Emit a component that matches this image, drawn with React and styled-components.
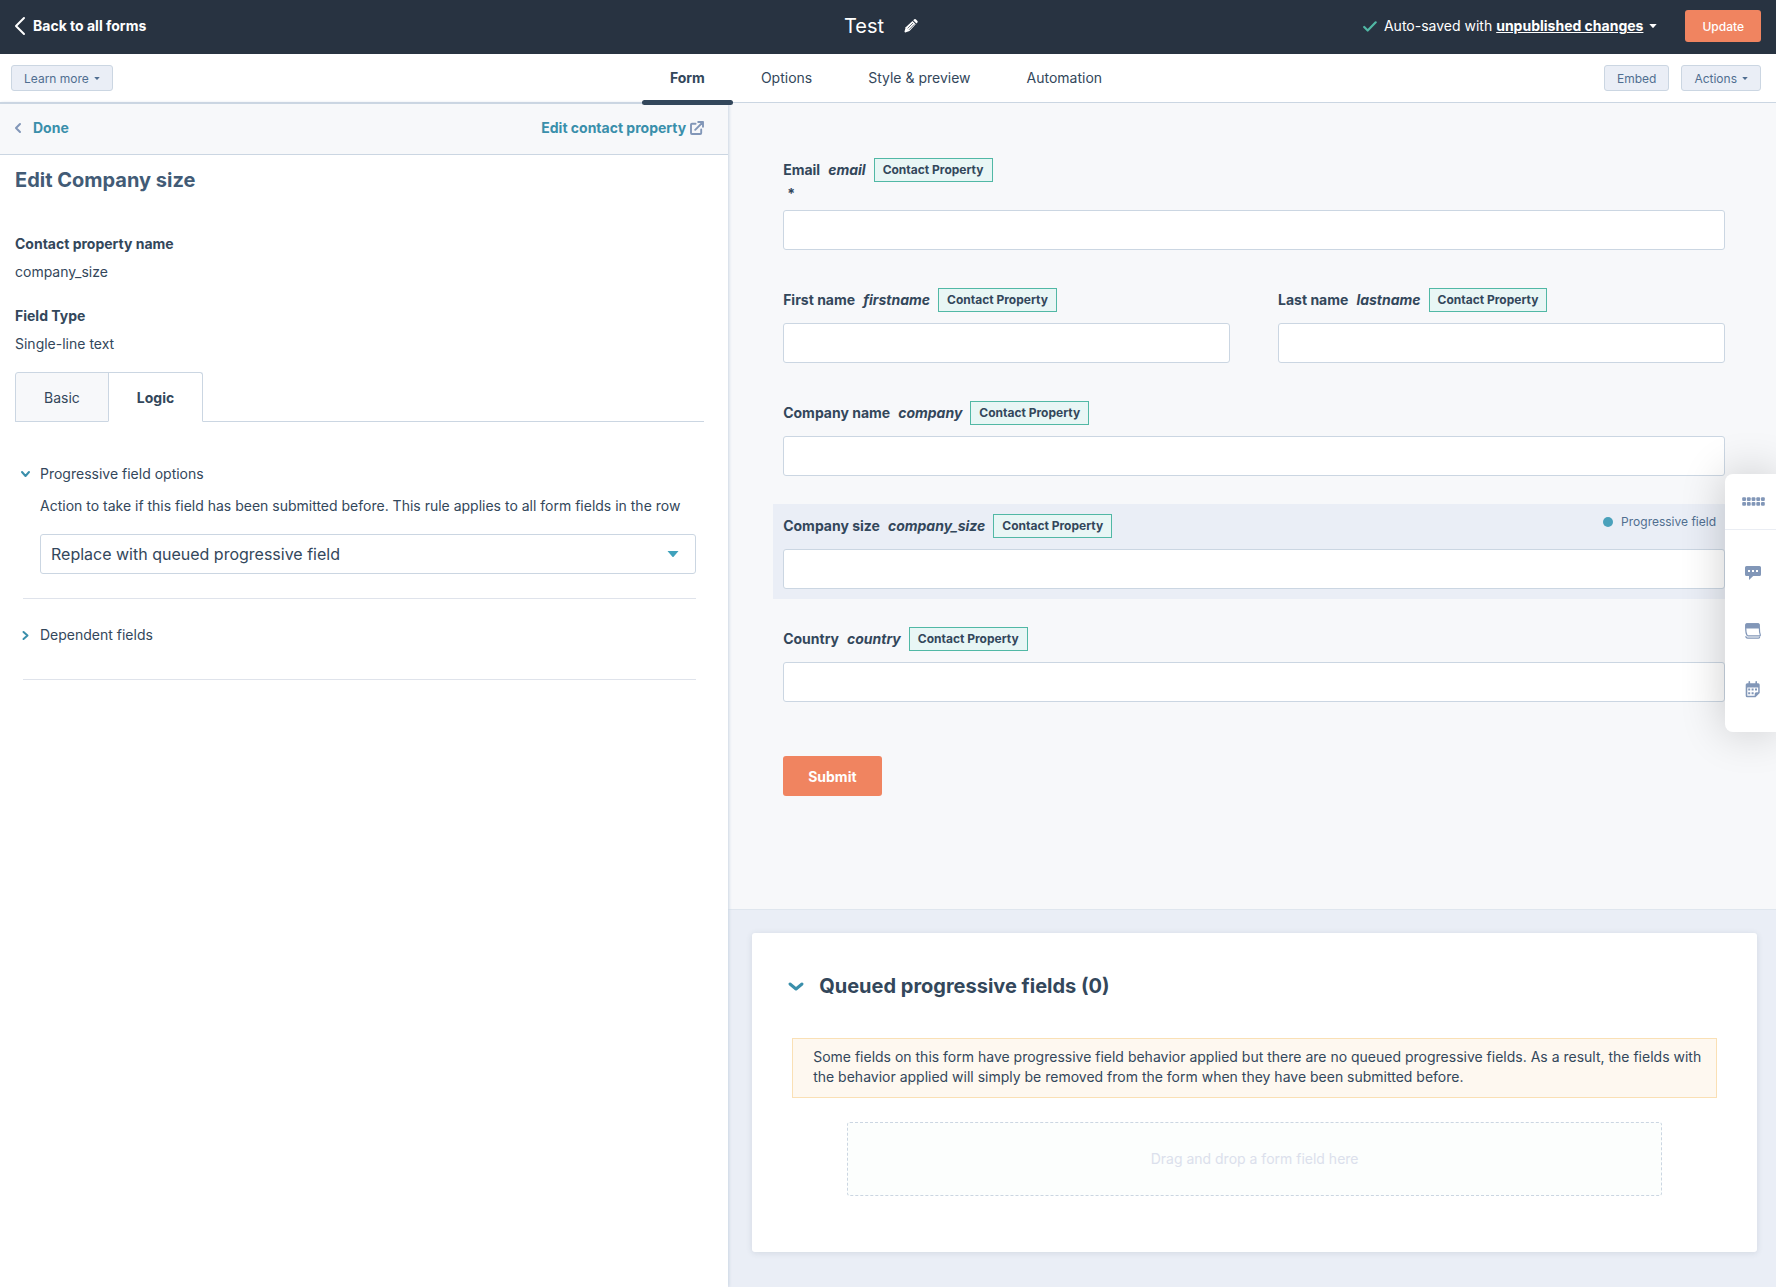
import React, { useState } from "react";
import styled, { createGlobalStyle } from "styled-components";

const GlobalStyle = createGlobalStyle`
  * {
    box-sizing: border-box;
  }

  body {
    margin: 0;
    background: #ffffff;
    color: #33475b;
    font-family: Inter, "Open Sans", sans-serif;
    font-size: 14px;
    line-height: 20px;
  }

  button, input, select {
    font-family: inherit;
  }

  a {
    text-decoration: none;
  }
`;

const Page = styled.div`
  display: flex;
  flex-direction: column;
  min-height: 100vh;
`;

const TopBar = styled.header`
  display: grid;
  grid-template-columns: 1fr auto 1fr;
  align-items: center;
  height: 54px;
  padding: 0 15px 2px;
  background: #283341;
  color: #ffffff;
`;

const BackLink = styled.a`
  display: flex;
  align-items: center;
  gap: 8px;
  color: #ffffff;
  font-weight: 700;
`;

const FormTitle = styled.h1`
  display: flex;
  align-items: center;
  gap: 20px;
  margin: 0;
  padding-right: 14px;
  font-size: 20px;
  font-weight: 400;
`;

const IconButton = styled.button`
  display: flex;
  align-items: center;
  justify-content: center;
  padding: 0;
  border: none;
  background: none;
  color: inherit;
  cursor: pointer;
`;

const TopActions = styled.div`
  display: flex;
  align-items: center;
  justify-content: flex-end;
  gap: 28px;
`;

const SaveStatus = styled.div`
  display: flex;
  align-items: center;
  gap: 7px;
`;

const ChangesButton = styled.button`
  display: flex;
  align-items: center;
  gap: 6px;
  padding: 0;
  border: none;
  background: none;
  color: #ffffff;
  font-size: 14px;
  font-weight: 700;
  line-height: 20px;
  cursor: pointer;

  span {
    text-decoration: underline;
  }
`;

const StatusText = styled.span`
  display: flex;
  gap: 4px;
`;

const PrimaryButton = styled.button`
  height: ${props => (props.$large ? "40px" : "32px")};
  padding: 0 ${props => (props.$large ? "25px" : "17px")};
  border: none;
  border-radius: 3px;
  background: #f08460;
  color: #ffffff;
  font-size: ${props => (props.$large ? "14px" : "12px")};
  font-weight: ${props => (props.$large ? 700 : 500)};
  cursor: pointer;
`;

const SubBar = styled.div`
  display: grid;
  grid-template-columns: 1fr auto 1fr;
  align-items: stretch;
  height: 49px;
  padding: 0 15px 0 11px;
  border-bottom: 1px solid #cbd6e2;
`;

const SubBarGroup = styled.div`
  display: flex;
  align-items: center;
  justify-content: ${props => (props.$end ? "flex-end" : "flex-start")};
  gap: 12px;
`;

const SmallButton = styled.button`
  display: flex;
  align-items: center;
  gap: 5px;
  height: 26px;
  padding: 0 12px;
  border: 1px solid #cbd6e2;
  border-radius: 3px;
  background: #eaeef6;
  color: #506e91;
  font-size: 12px;
  cursor: pointer;
`;

const NavTabs = styled.nav`
  display: flex;
`;

const NavTab = styled.a`
  position: relative;
  display: flex;
  align-items: center;
  padding: 0 28px;
  color: #33475b;
  font-weight: ${props => (props.$active ? 700 : 400)};

  /* underline hangs over the bar's bottom border */
  &::after {
    position: absolute;
    right: 0;
    bottom: -3px;
    left: 0;
    z-index: 2;
    height: 5px;
    border-radius: 3px;
    background: ${props => (props.$active ? "#33475b" : "transparent")};
    content: "";
  }
`;

const Body = styled.div`
  display: flex;
  flex: 1;
`;

const EditorPanel = styled.aside`
  position: relative;
  z-index: 1;
  flex: 0 0 41%;
  background: #ffffff;
  box-shadow: 1px 0 3px #cbd6e2;
`;

const PanelHeader = styled.div`
  display: flex;
  align-items: center;
  justify-content: space-between;
  height: 52px;
  padding: 0 24px 2px 15px;
  border-top: 1px solid #cbd6e2;
  border-bottom: 1px solid #cbd6e2;
  background: #f7f8fa;
`;

const PanelLink = styled.a`
  display: flex;
  align-items: center;
  gap: ${props => props.$gap};
  color: #3a8fab;
  font-weight: 700;

  svg {
    color: #8297b8;
  }
`;

const PanelBody = styled.div`
  padding: 13px 24px 24px 15px;
`;

const PanelTitle = styled.h2`
  margin: 0 0 42px;
  color: #425b76;
  font-size: 20px;
  font-weight: 700;
  line-height: 24px;
`;

const Details = styled.dl`
  margin: 0;

  dt {
    margin-bottom: 8px;
    font-weight: 700;
  }

  dd {
    margin: 0 0 24px;
  }
`;

const TabList = styled.div`
  display: flex;
  margin-top: -6px;
  border-bottom: 1px solid #cbd6e2;
`;

const TabButton = styled.button`
  height: 50px;
  margin: 0 0 -1px ${props => (props.$active ? "-1px" : "0")};
  padding: 0 28px;
  border: 1px solid #cbd6e2;
  border-bottom-color: ${props => (props.$active ? "#ffffff" : "#cbd6e2")};
  border-radius: ${props => (props.$active ? "0 3px 0 0" : "3px 0 0 0")};
  background: ${props => (props.$active ? "#ffffff" : "#f7f8fa")};
  color: #33475b;
  font-size: 14px;
  font-weight: ${props => (props.$active ? 700 : 400)};
  cursor: pointer;
`;

const Accordion = styled.section`
  margin: 0 8px;
  padding: ${props => props.$padding};
  border-bottom: 1px solid #dfe3eb;
`;

const AccordionButton = styled.button`
  display: flex;
  align-items: center;
  gap: 10px;
  margin-left: -2px;
  padding: 0;
  border: none;
  background: none;
  color: #33475b;
  font-size: 14px;
  line-height: 20px;
  cursor: pointer;

  svg {
    width: 9px;
    color: #3a8fab;
  }
`;

const AccordionBody = styled.div`
  display: flex;
  flex-direction: column;
  gap: 18px;
  margin-top: 12px;
  padding-left: 17px;
`;

const SelectBox = styled.div`
  display: grid;
  align-items: center;

  select, svg {
    grid-area: 1 / 1;
  }

  select {
    width: 100%;
    height: 40px;
    padding: 0 40px 0 10px;
    border: 1px solid #cbd6e2;
    border-radius: 3px;
    background: #ffffff;
    color: #33475b;
    font-size: 16px;
    appearance: none;
  }

  svg {
    justify-self: end;
    margin-right: 17px;
    color: #3fa2bc;
    pointer-events: none;
  }
`;

const Preview = styled.main`
  display: flex;
  flex: 1;
  flex-direction: column;
  min-width: 0;
  background: #eaeef6;
`;

const FormArea = styled.form`
  display: flex;
  flex-direction: column;
  gap: 18px;
  padding: 45px 41px 113px 45px;
  border-bottom: 1px solid #dfe6ee;
  background: #f7f8fa;
`;

const FieldRow = styled.div`
  display: flex;
  gap: 28px;
`;

const FieldCell = styled.div`
  flex: 1;
  padding: 10px;
  background: ${props => (props.$selected ? "#eaeef6" : "transparent")};
`;

const FieldTop = styled.div`
  display: flex;
  align-items: flex-start;
  justify-content: space-between;
  padding-right: 9px;
`;

const FieldLabel = styled.label`
  display: flex;
  align-items: center;
  height: 24px;
  gap: 8px;
  font-weight: 700;
  white-space: nowrap;
`;

const PropertyTag = styled.span`
  height: 24px;
  padding: 0 8px;
  border: 1px solid #51b8a5;
  background: #e8f6f5;
  font-size: 12px;
  line-height: 22px;
`;

const Required = styled.div`
  height: 17px;
  padding: 2px 0 0 4px;
  font-weight: 700;
`;

const TextInput = styled.input`
  display: block;
  width: 100%;
  height: 40px;
  margin-top: 11px;
  padding: 0 10px;
  border: 1px solid #cbd6e2;
  border-radius: 3px;
  background: #ffffff;
  font-size: 16px;
`;

const ProgressiveNote = styled.span`
  display: flex;
  align-items: center;
  gap: 8px;
  height: 16px;
  color: #516f90;
  font-size: 12px;

  &::before {
    width: 10px;
    height: 10px;
    border-radius: 50%;
    background: #4aa1bb;
    content: "";
  }
`;

const SubmitRow = styled.div`
  padding: 26px 10px 0;
`;

const QueueCard = styled.section`
  margin: 23px 19px 35px 24px;
  padding: 40px 40px 56px;
  border-radius: 3px;
  background: #ffffff;
  box-shadow: 0 1px 6px rgba(45, 62, 80, 0.12);
`;

const QueueTitle = styled.h3`
  margin: 0 0 39px;

  button {
    gap: 16px;
    margin-left: -3px;
    font-size: 20px;
    font-weight: 700;
    line-height: 26px;
  }

  svg {
    width: 14px;
  }
`;

const Alert = styled.div`
  padding: 8px 8px 10px 20px;
  border: 1px solid #fae0b5;
  background: #fef8f0;
`;

const DropZone = styled.div`
  display: flex;
  align-items: center;
  justify-content: center;
  height: 74px;
  margin: 24px 55px 0;
  border: 1px dashed #cbd6e2;
  border-radius: 3px;
  background: #fcfefd;
  color: #dbe0ec;
`;

const SideDock = styled.div`
  position: fixed;
  top: 474px;
  right: 0;
  z-index: 3;
  display: flex;
  flex-direction: column;
  width: 51px;
  height: 258px;
  border-radius: 8px 0 0 8px;
  background: #ffffff;
  box-shadow: 0 0 45px rgba(0, 0, 0, 0.2);
  color: #8297b8;
`;

const DockHandle = styled(IconButton)`
  height: 56px;
  padding-left: 6px;
  border-bottom: 1px solid #eaedf3;
`;

const DockItems = styled.div`
  display: flex;
  flex-direction: column;
  gap: 42px;
  padding: 35px 0 0 5px;
`;

const DockButton = styled(IconButton)`
  height: 16px;
`;

const Chevron = ({ direction, width, height, stroke }) => {
    const points = {
        left: `${width - 1},1 1,${height / 2} ${width - 1},${height - 1}`,
        right: `1,1 ${width - 1},${height / 2} 1,${height - 1}`,
        down: `1,1 ${width / 2},${height - 1} ${width - 1},1`,
    };
    return (
        <svg width={width} height={height} viewBox={`0 0 ${width} ${height}`} fill="none" stroke="currentColor"
            strokeWidth={stroke} strokeLinecap="round" strokeLinejoin="round" overflow="visible" aria-hidden="true">
            <polyline points={points[direction]}/>
        </svg>
    );
};

const Caret = ({ width, height }) => (
    <svg width={width} height={height} viewBox="0 0 10 5" preserveAspectRatio="none" fill="currentColor" aria-hidden="true">
        <path d="M0.4 0h9.2L5.5 4.7a0.7 0.7 0 0 1-1 0z"/>
    </svg>
);

const PencilIcon = () => (
    <svg width="14" height="14" viewBox="0 0 14 14" fill="currentColor" aria-hidden="true">
        <path d="M9.2 1.2 10 .5a1.4 1.4 0 0 1 2 0l1.2 1.2a1.4 1.4 0 0 1 0 2l-.8.8z"/>
        <path d="M8.5 1.9 1.7 8.2.5 12.6c-.1.5.3.9.8.8l4.2-1.3 6.2-6.9z"/>
        <path d="M3.6 9.4 9 4M5 10.8l5.3-5.4" stroke="#283341" strokeWidth=".7"/>
    </svg>
);

const CheckIcon = () => (
    <svg width="14" height="11" viewBox="0 0 14 11" fill="none" stroke="#51b8a5" strokeWidth="2.2"
        strokeLinecap="round" strokeLinejoin="round" aria-hidden="true">
        <path d="M1.2 6 4.7 9.5 12.7 1.3"/>
    </svg>
);

const ExternalIcon = () => (
    <svg width="14" height="14" viewBox="0 0 14 14" fill="none" stroke="currentColor" strokeWidth="1.9"
        strokeLinecap="round" strokeLinejoin="round" aria-hidden="true">
        <path d="M5.6 2.7H2a1 1 0 0 0-1 1V12a1 1 0 0 0 1 1h8.2a1 1 0 0 0 1-1V8.4"/>
        <path d="M8.2 1H13v4.800M13 1 5.200 8.800"/>
    </svg>
);

const HandleIcon = () => (
    <svg width="23" height="9" viewBox="0 0 23 9" fill="currentColor" aria-hidden="true">
        {[0, 1, 2, 3, 4].map(col => (
            <g key={col}>
                <rect x={col * 4.7 + 0.2} y="0.2" width="3.8" height="3.8" rx="1"/>
                <rect x={col * 4.7 + 0.2} y="4.9" width="3.8" height="3.8" rx="1"/>
            </g>
        ))}
    </svg>
);

const ChatIcon = () => (
    <svg width="16" height="14" viewBox="0 0 16 14" aria-hidden="true">
        <path d="M1.5 0h13A1.5 1.5 0 0 1 16 1.5v7a1.5 1.5 0 0 1-1.5 1.5H8.2L4 14v-4H1.5A1.5 1.5 0 0 1 0 8.500v-7A1.500 1.500 0 0 1 1.500 0z" fill="currentColor"/>
        <path d="M3 4h2v2H3zM7 4h2v2H7zM11 4h2v2h-2z" fill="#ffffff"/>
    </svg>
);

const PagesIcon = () => (
    <svg width="16" height="16" viewBox="0 0 16 16" fill="none" stroke="currentColor" aria-hidden="true">
        <path d="M.6 5V1.6a1 1 0 0 1 1-1h11.800a1 1 0 0 1 1 1V5z" fill="currentColor" strokeWidth="1"/>
        <path d="M.7 5c0 3 .2 5.500 1.300 7.200.3.500.8.700 1.300.700h11.200c.8 0 1-.6.700-1.300C14.400 9.800 14.400 7.500 14.400 5" strokeWidth="1.200"/>
        <path d="M.6 13.200c.4 1.300 1 1.900 2 1.900h10.900c.8 0 1.200-.6 1.200-1.600" strokeWidth="1.200"/>
    </svg>
);

const CalendarIcon = () => (
    <svg width="16" height="17" viewBox="0 0 16 17" aria-hidden="true">
        <path d="M4.300 0.800v3M11.200 0.800v3" stroke="currentColor" strokeWidth="1.600" strokeLinecap="round"/>
        <path d="M2.200 2.200h11a1.500 1.500 0 0 1 1.500 1.500V12L10.500 16.300H2.200a1.500 1.500 0 0 1-1.500-1.500V3.700a1.500 1.500 0 0 1 1.500-1.500z" fill="currentColor"/>
        <path d="M2.300 6.500h10.900v4.700h-2a1.500 1.500 0 0 0-1.500 1.500v2.100H2.300z" fill="#ffffff"/>
        <path d="M3.200 7.600h2v2h-2zM6.600 7.600h2v2h-2zM10 7.600h2v2h-2zM3.200 11.200h2v2h-2zM6.600 11.200h2v2h-2z" fill="currentColor"/>
    </svg>
);

const rows = [
    [{ label: "Email", name: "email", required: true }],
    [{ label: "First name", name: "firstname" }, { label: "Last name", name: "lastname" }],
    [{ label: "Company name", name: "company" }],
    [{ label: "Company size", name: "company_size", progressive: true }],
    [{ label: "Country", name: "country" }],
];

const navItems = ["Form", "Options", "Style & preview", "Automation"];

const Field = ({ field }) => (
    <FieldCell $selected={field.progressive}>
        <FieldTop>
            <FieldLabel htmlFor={field.name}>
                {field.label} <em>{field.name}</em>
                <PropertyTag>Contact Property</PropertyTag>
            </FieldLabel>
            {field.progressive && <ProgressiveNote>Progressive field</ProgressiveNote>}
        </FieldTop>
        {field.required && <Required>*</Required>}
        <TextInput id={field.name} name={field.name} type="text"/>
    </FieldCell>
);

const App = () => {
    const [tab, setTab] = useState("Logic");

    return (
        <Page>
            <GlobalStyle/>
            <TopBar>
                <BackLink href="#forms">
                    <Chevron direction="left" width={10} height={18} stroke={2}/>
                    Back to all forms
                </BackLink>
                <FormTitle>
                    Test
                    <IconButton type="button" aria-label="Rename form"><PencilIcon/></IconButton>
                </FormTitle>
                <TopActions>
                    <SaveStatus>
                        <CheckIcon/>
                        <StatusText>
                            Auto-saved with
                            <ChangesButton type="button">
                                <span>unpublished changes</span>
                                <Caret width={8} height={4}/>
                            </ChangesButton>
                        </StatusText>
                    </SaveStatus>
                    <PrimaryButton type="button">Update</PrimaryButton>
                </TopActions>
            </TopBar>
            <SubBar>
                <SubBarGroup>
                    <SmallButton type="button">Learn more <Caret width={6} height={3}/></SmallButton>
                </SubBarGroup>
                <NavTabs>
                    {navItems.map(item => (
                        <NavTab key={item} href="#tab" $active={item === "Form"}>{item}</NavTab>
                    ))}
                </NavTabs>
                <SubBarGroup $end>
                    <SmallButton type="button">Embed</SmallButton>
                    <SmallButton type="button">Actions <Caret width={6} height={3}/></SmallButton>
                </SubBarGroup>
            </SubBar>
            <Body>
                <EditorPanel>
                    <PanelHeader>
                        <PanelLink href="#done" $gap="12px">
                            <Chevron direction="left" width={6} height={10} stroke={2}/>
                            Done
                        </PanelLink>
                        <PanelLink href="#property" $gap="4px">
                            Edit contact property
                            <ExternalIcon/>
                        </PanelLink>
                    </PanelHeader>
                    <PanelBody>
                        <PanelTitle>Edit Company size</PanelTitle>
                        <Details>
                            <dt>Contact property name</dt>
                            <dd>company_size</dd>
                            <dt>Field Type</dt>
                            <dd>Single-line text</dd>
                        </Details>
                        <TabList role="tablist">
                            {["Basic", "Logic"].map(name => (
                                <TabButton key={name} type="button" role="tab" aria-selected={tab === name}
                                    $active={tab === name} onClick={() => setTab(name)}>
                                    {name}
                                </TabButton>
                            ))}
                        </TabList>
                        <Accordion $padding="42px 0 24px">
                            <AccordionButton type="button" aria-expanded="true">
                                <Chevron direction="down" width={9} height={6} stroke={2}/>
                                Progressive field options
                            </AccordionButton>
                            <AccordionBody>
                                <label htmlFor="progressive-action">
                                    Action to take if this field has been submitted before. This rule applies to all form fields in the row
                                </label>
                                <SelectBox>
                                    <select id="progressive-action">
                                        <option>Replace with queued progressive field</option>
                                    </select>
                                    <Caret width={12} height={6}/>
                                </SelectBox>
                            </AccordionBody>
                        </Accordion>
                        <Accordion $padding="26px 0 34px">
                            <AccordionButton type="button" aria-expanded="false">
                                <Chevron direction="right" width={6} height={9} stroke={2}/>
                                Dependent fields
                            </AccordionButton>
                        </Accordion>
                    </PanelBody>
                </EditorPanel>
                <Preview>
                    <FormArea onSubmit={e => e.preventDefault()}>
                        {rows.map(row => (
                            <FieldRow key={row[0].name}>
                                {row.map(field => <Field key={field.name} field={field}/>)}
                            </FieldRow>
                        ))}
                        <SubmitRow>
                            <PrimaryButton type="submit" $large>Submit</PrimaryButton>
                        </SubmitRow>
                    </FormArea>
                    <QueueCard>
                        <QueueTitle>
                            <AccordionButton type="button" aria-expanded="true">
                                <Chevron direction="down" width={14} height={7} stroke={3}/>
                                Queued progressive fields (0)
                            </AccordionButton>
                        </QueueTitle>
                        <Alert role="status">
                            Some fields on this form have progressive field behavior applied but there are no queued
                            progressive fields. As a result, the fields with the behavior applied will simply be removed
                            from the form when they have been submitted before.
                        </Alert>
                        <DropZone>Drag and drop a form field here</DropZone>
                    </QueueCard>
                </Preview>
            </Body>
            <SideDock>
                <DockHandle type="button" aria-label="Move toolbar"><HandleIcon/></DockHandle>
                <DockItems>
                    <DockButton type="button" aria-label="Chat"><ChatIcon/></DockButton>
                    <DockButton type="button" aria-label="Pages"><PagesIcon/></DockButton>
                    <DockButton type="button" aria-label="Calendar"><CalendarIcon/></DockButton>
                </DockItems>
            </SideDock>
        </Page>
    );
};

export default App;
